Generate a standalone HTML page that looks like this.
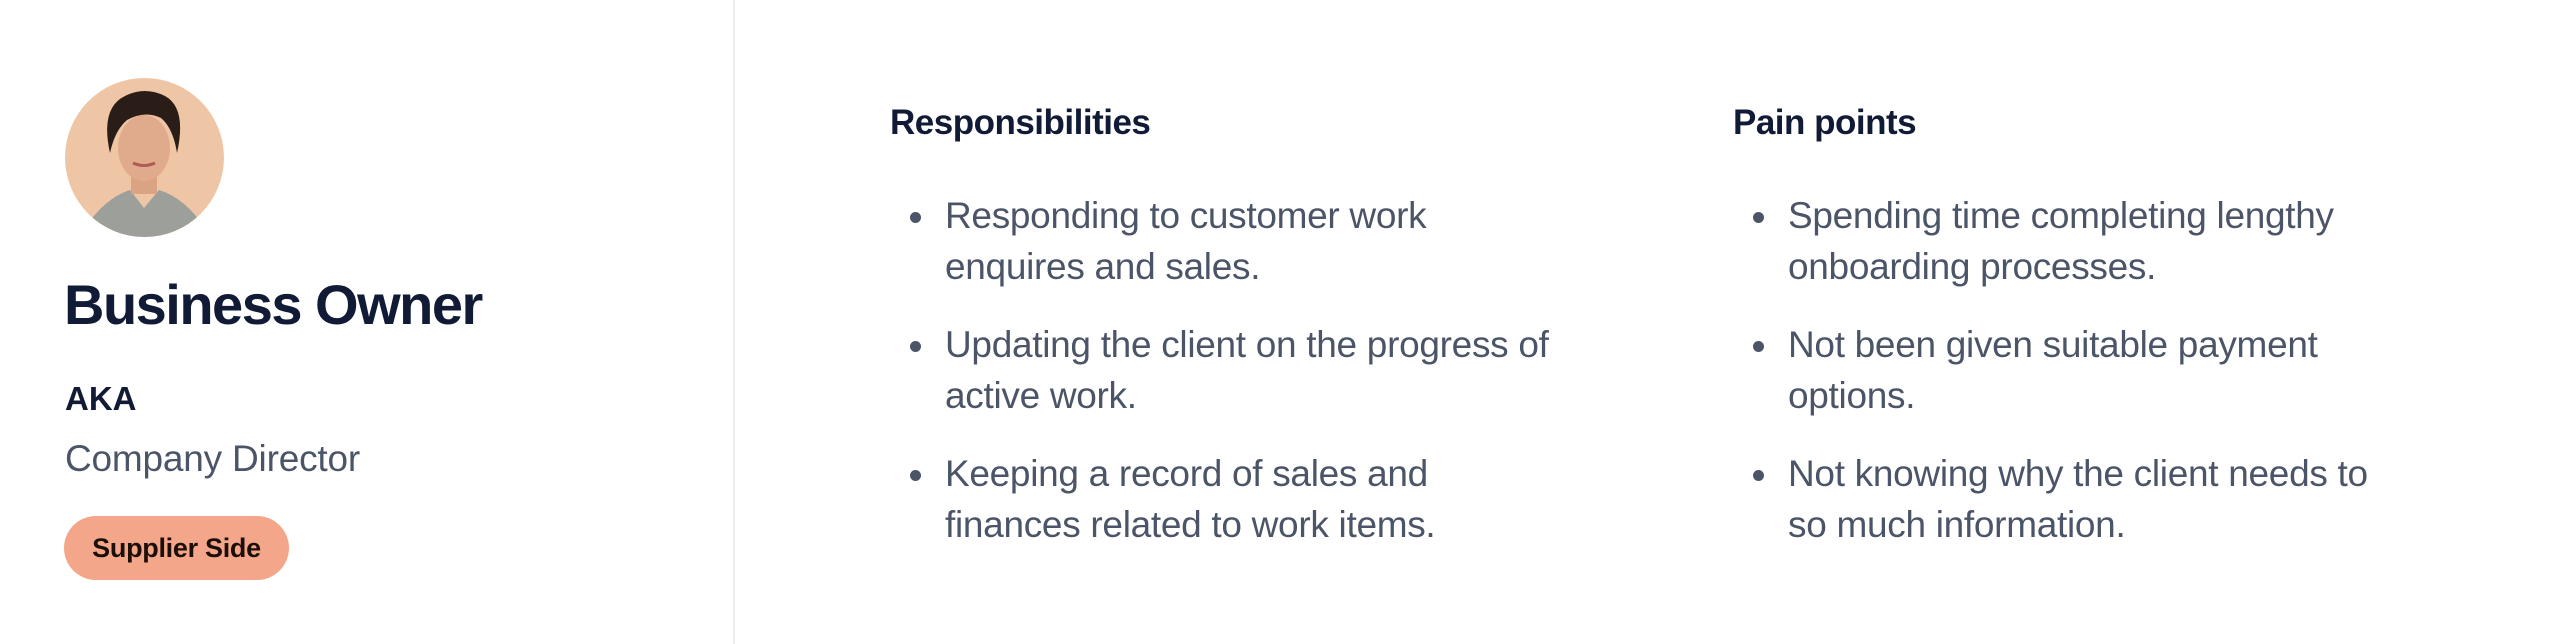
<!DOCTYPE html>
<html><head><meta charset="utf-8"><style>
html,body{margin:0;padding:0;background:#fff;width:2560px;height:644px;overflow:hidden;font-family:"Liberation Sans",sans-serif}
.divider{position:absolute;left:733px;top:0;width:2px;height:644px;background:#eceef1}
.av{position:absolute;left:65px;top:78px;width:159px;height:159px;border-radius:50%;background:#efc6a5;overflow:hidden}
.t{position:absolute;white-space:nowrap}
h1{position:absolute;left:64px;top:270px;margin:0;font-size:56px;font-weight:700;color:#111b36;letter-spacing:-1.5px;line-height:70px}
.aka{left:65px;top:377px;font-size:33px;font-weight:700;color:#111b36;line-height:44px}
.cd{left:65px;top:437px;font-size:37px;color:#4b5567;line-height:44px;letter-spacing:-0.2px}
.pill{position:absolute;left:64px;top:516px;width:225px;height:64px;border-radius:32px;background:#f4a68b;color:#1c0f08;font-size:27px;font-weight:700;line-height:64px;text-align:center;letter-spacing:-0.3px}
h2{position:absolute;margin:0;font-size:35px;font-weight:700;color:#111b36;top:101px;line-height:44px;letter-spacing:-0.5px}
ul{position:absolute;margin:0;padding:0;list-style:none;top:190px}
li{position:relative;padding-left:55px;font-size:37px;color:#4b5567;line-height:51px;margin-bottom:27px;white-space:nowrap;letter-spacing:-0.3px}
li:before{content:"";position:absolute;left:20px;top:22px;width:11px;height:11px;border-radius:50%;background:#4b5567}
</style></head><body>
<div class="divider"></div>
<div class="av"><svg width="159" height="159" viewBox="0 0 159 159">
<path d="M20 150 Q40 120 65 112 L79 130 L94 112 Q120 120 140 150 L140 170 L20 170Z" fill="#9d9f9a"/>
<rect x="66" y="88" width="26" height="28" fill="#d9a384"/>
<ellipse cx="79" cy="70" rx="26" ry="33" fill="#e0ab8c"/>
<path d="M45 75 Q35 30 60 18 Q80 8 100 18 Q122 30 112 75 Q108 50 96 40 Q80 32 62 42 Q50 52 45 75Z" fill="#2a1c16"/>
<path d="M68 85 Q79 90 90 85" stroke="#b05a55" stroke-width="3" fill="none"/>
</svg></div>
<h1>Business Owner</h1>
<div class="t aka">AKA</div>
<div class="t cd">Company Director</div>
<div class="pill">Supplier Side</div>

<h2 style="left:890px">Responsibilities</h2>
<ul style="left:890px">
<li>Responding to customer work<br>enquires and sales.</li>
<li>Updating the client on the progress of<br>active work.</li>
<li>Keeping a record of sales and<br>finances related to work items.</li>
</ul>

<h2 style="left:1733px">Pain points</h2>
<ul style="left:1733px">
<li>Spending time completing lengthy<br>onboarding processes.</li>
<li>Not been given suitable payment<br>options.</li>
<li>Not knowing why the client needs to<br>so much information.</li>
</ul>
</body></html>
